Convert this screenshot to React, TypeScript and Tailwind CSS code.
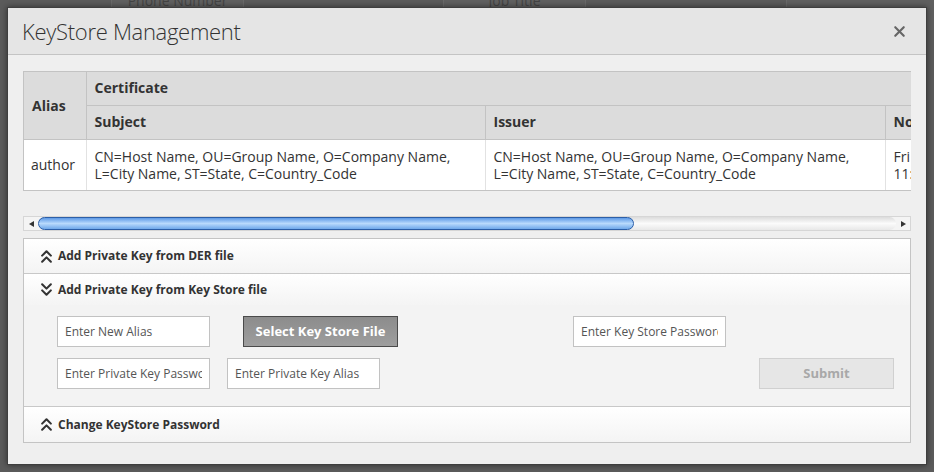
import { ChevronsDown, ChevronsUp, X } from "lucide-react";

const font = { fontFamily: '"Open Sans", "Liberation Sans", sans-serif' };

const certText = (
  <>
    CN=Host Name, OU=Group Name, O=Company Name,
    <br />
    L=City Name, ST=State, C=Country_Code
  </>
);

function ScrollBar() {
  return (
    <div className="mt-[25px] flex h-[15px] items-center border border-[#d6d6d6] bg-[#f4f4f4]">
      <div className="flex h-full w-[14px] items-center justify-center">
        <div className="h-0 w-0 border-y-[3px] border-r-[5px] border-y-transparent border-r-[#333]" />
      </div>
      <div className="flex h-full flex-1 items-center rounded-full bg-gradient-to-b from-[#dcdcdc] via-[#fbfbfb] to-[#e8e8e8]">
        <div className="h-[13px] w-[596px] rounded-full border border-[#2c5fa8] bg-gradient-to-b from-[#5e9ae6] via-[#b9dafc] to-[#6fa8ea]" />
      </div>
      <div className="flex h-full w-[14px] items-center justify-center">
        <div className="h-0 w-0 border-y-[3px] border-l-[5px] border-y-transparent border-l-[#333]" />
      </div>
    </div>
  );
}

function SectionHeader({
  title,
  open,
  className,
}: {
  title: string;
  open?: boolean;
  className?: string;
}) {
  const Icon = open ? ChevronsDown : ChevronsUp;
  return (
    <div
      className={`flex items-center gap-[1px] bg-gradient-to-b from-white to-[#f4f4f4] pl-[12px] text-[12px] font-bold text-[#333] ${className}`}
    >
      <Icon size={21} strokeWidth={2.4} color="#333" />
      <span>{title}</span>
    </div>
  );
}

function Field({ placeholder, className }: { placeholder: string; className?: string }) {
  return (
    <input
      type="text"
      placeholder={placeholder}
      className={`h-[31px] w-[153px] border border-[#c2c2c2] bg-white px-[7px] text-[12px] text-[#333] outline-none placeholder:text-[#555] ${className}`}
    />
  );
}

export default function App() {
  return (
    <div className="relative h-[472px] w-[934px] overflow-hidden bg-[#5b5b5b]" style={font}>
      {/* page behind the modal */}
      <div className="flex h-[30px] text-[14px] text-[#444]">
        <div className="w-[111px]" />
        <div className="flex w-[133px] justify-center border-x border-[#6a6a6a] bg-[#606060]">
          <span className="-mt-[10px]">Phone Number</span>
        </div>
        <div className="w-[199px]" />
        <div className="flex w-[143px] justify-center border-x border-[#6a6a6a] bg-[#606060]">
          <span className="-mt-[10px]">Job Title</span>
        </div>
        <div className="w-[200px]" />
        <div className="w-[148px] border-l border-[#6a6a6a] bg-[#606060]" />
      </div>

      {/* modal */}
      <div className="absolute left-[7px] top-[7px] flex h-[458px] w-[920px] flex-col border border-[#3e3e3e] bg-[#efefef] shadow-[0_0_6px_rgba(0,0,0,0.5)]">
        <div className="flex h-[47px] shrink-0 items-center justify-between border-b border-[#c4c4c4] bg-[#e5e5e5] pl-[14px] pr-[18px]">
          <h1 className="text-[22px] font-light tracking-[-0.3px] text-[#333]">KeyStore Management</h1>
          <X size={17} strokeWidth={3} color="#666" />
        </div>

        <div className="flex flex-1 flex-col px-[15px] pt-[16px]">
          <div className="h-[120px] w-[888px] overflow-hidden border-y border-l border-[#c3c3c3] bg-white">
            <table className="w-[1100px] table-fixed border-collapse text-left text-[14px] text-[#333]">
              <colgroup>
                <col className="w-[62px]" />
                <col className="w-[399px]" />
                <col className="w-[400px]" />
                <col className="w-[239px]" />
              </colgroup>
              <thead className="bg-[#dcdcdc] font-bold">
                <tr className="h-[33px]">
                  <th rowSpan={2} className="border-r border-[#c3c3c3] px-[8px] align-middle">
                    Alias
                  </th>
                  <th colSpan={3} className="border-b border-[#c3c3c3] px-[8px] pb-[2px]">
                    Certificate
                  </th>
                </tr>
                <tr className="h-[34px]">
                  <th className="border-r border-[#c3c3c3] px-[8px] pb-[2px]">Subject</th>
                  <th className="border-r border-[#c3c3c3] px-[8px] pb-[2px]">Issuer</th>
                  <th className="px-[8px] pb-[2px]">Not Before</th>
                </tr>
              </thead>
              <tbody>
                <tr className="h-[51px] border-t border-[#c3c3c3] leading-[17px]">
                  <td className="border-r border-[#e2e2e2] px-[7px]">author</td>
                  <td className="border-r border-[#e2e2e2] px-[8px]">{certText}</td>
                  <td className="border-r border-[#e2e2e2] px-[8px]">{certText}</td>
                  <td className="whitespace-nowrap px-[8px]">
                    Fri Jan 16 2015
                    <br />
                    11:24:33 GMT+0530
                  </td>
                </tr>
              </tbody>
            </table>
          </div>

          <ScrollBar />

          <div className="mt-[7px] flex flex-col border border-[#c4c4c4]">
            <SectionHeader title="Add Private Key from DER file" className="h-[35px] border-b border-[#c8c8c8]" />
            <SectionHeader title="Add Private Key from Key Store file" open className="h-[31px]" />
            <div className="flex flex-col gap-[11px] bg-[#f3f3f3] pb-[17px] pl-[33px] pr-[16px] pt-[11px]">
              <div className="flex">
                <Field placeholder="Enter New Alias" />
                <button className="ml-[33px] h-[31px] w-[155px] border border-[#4a4a4a] bg-gradient-to-b from-[#8c8c8c] to-[#9e9e9e] text-[13px] font-bold text-white">
                  Select Key Store File
                </button>
                <Field placeholder="Enter Key Store Password" className="ml-[175px]" />
              </div>
              <div className="flex">
                <Field placeholder="Enter Private Key Password" />
                <Field placeholder="Enter Private Key Alias" className="ml-[17px]" />
                <button className="ml-auto h-[31px] w-[135px] border border-[#d0d0d0] bg-[#e6e6e6] text-[13px] font-bold text-[#a8a8a8]">
                  Submit
                </button>
              </div>
            </div>
            <SectionHeader title="Change KeyStore Password" className="h-[36px] border-t border-[#c8c8c8]" />
          </div>
        </div>
      </div>
    </div>
  );
}
